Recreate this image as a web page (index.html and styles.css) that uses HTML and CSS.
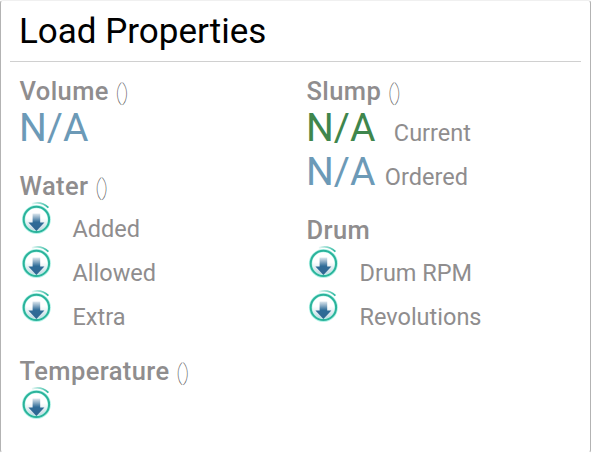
FILE: index.html
```html
<!DOCTYPE html>
<html lang="en">
<head>
  <meta charset="UTF-8">
  <title>Load Properties</title>
  <link rel="stylesheet" href="styles.css">
</head>
<body>
  <!-- shared waiting-for-data icon -->
  <svg class="defs" width="0" height="0">
    <defs>
      <linearGradient id="arrowFade" x1="0" y1="0" x2="0" y2="1">
        <stop offset="0" stop-color="#2f6c98" stop-opacity="0.15"/>
        <stop offset="0.5" stop-color="#2f6c98"/>
        <stop offset="1" stop-color="#2f6691"/>
      </linearGradient>
      <linearGradient id="discFade" x1="0" y1="0" x2="0" y2="1">
        <stop offset="0.45" stop-color="#fff"/>
        <stop offset="1" stop-color="#b9d3de"/>
      </linearGradient>
      <linearGradient id="tailFade" x1="0" y1="0" x2="1" y2="0">
        <stop offset="0" stop-color="#2bb9a0" stop-opacity="0.1"/>
        <stop offset="1" stop-color="#2bb9a0"/>
      </linearGradient>
      <symbol id="loading" viewBox="0 0 32 34">
        <circle cx="16.4" cy="19.4" r="12.8" fill="url(#discFade)" stroke="#b4f3e8" stroke-width="3.4"/>
        <circle cx="16.4" cy="19.4" r="12.7" fill="none" stroke="#2bb39b" stroke-width="2"/>
        <path d="M12 3.8C18 1.8 24 3.6 28.4 7.6" fill="none" stroke="url(#tailFade)" stroke-width="1.8"/>
        <path d="M12.6 13.4h7.6v9.2h4.2L16.4 30.9L8.4 22.6h4.2z" fill="url(#arrowFade)"/>
      </symbol>
    </defs>
  </svg>

  <div class="card">
    <h1 class="card-title">Load Properties</h1>
    <div class="columns">
      <div class="column">
        <section class="group">
          <h2>Volume <span class="unit">()</span></h2>
          <div class="row"><span class="value">N/A</span></div>
        </section>
        <section class="group water">
          <h2>Water <span class="unit">()</span></h2>
          <div class="row"><svg class="icon"><use href="#loading"/></svg><span class="label">Added</span></div>
          <div class="row"><svg class="icon"><use href="#loading"/></svg><span class="label">Allowed</span></div>
          <div class="row"><svg class="icon"><use href="#loading"/></svg><span class="label">Extra</span></div>
        </section>
        <section class="group">
          <h2>Temperature <span class="unit">()</span></h2>
          <div class="row"><svg class="icon"><use href="#loading"/></svg></div>
        </section>
      </div>
      <div class="column">
        <section class="group">
          <h2>Slump <span class="unit">()</span></h2>
          <div class="row"><span class="value current">N/A</span><span class="label">Current</span></div>
          <div class="row"><span class="value">N/A</span><span class="label">Ordered</span></div>
        </section>
        <section class="group">
          <h2>Drum</h2>
          <div class="row"><svg class="icon"><use href="#loading"/></svg><span class="label">Drum RPM</span></div>
          <div class="row"><svg class="icon"><use href="#loading"/></svg><span class="label">Revolutions</span></div>
        </section>
      </div>
    </div>
  </div>
</body>
</html>
```
FILE: styles.css
```css
* {
  box-sizing: border-box;
}

body {
  margin: 0;
  font-family: Roboto, sans-serif;
  color: #8f8d8e;
  background-color: #fff;
}

.defs {
  display: block;
}

.card {
  height: 453px;
  padding: 0 9px;
  border: 1px solid #b3b3b3;
  border-top-color: #f0f0f0;
  border-bottom-color: #fff;
  border-radius: 3px;
  overflow: hidden;
}

.card-title {
  height: 61px;
  margin: 0;
  padding-left: 9px;
  border-bottom: 1px solid #d0d0d0;
  font-size: 35px;
  font-weight: 400;
  line-height: 61px;
  color: #000;
}

.columns {
  display: grid;
  grid-template-columns: 287px 1fr;
  padding: 13px 0 0 9.5px;
}

.group {
  margin-bottom: 18px;
}

.water {
  margin-bottom: 20px;
}

h2 {
  height: 33px;
  margin: 0;
  font-size: 25.5px;
  font-weight: 500;
  line-height: 32px;
  letter-spacing: 0.4px;
}

.unit {
  font-size: 21.5px;
  font-weight: 100;
  line-height: 1;
  letter-spacing: 0;
  color: #555;
}

.row {
  display: flex;
  height: 44px;
}

.value {
  margin-left: -0.5px;
  font-size: 39px;
  line-height: 41px;
  color: #6c9ab7;
}

.value.current {
  margin-right: 9px;
  color: #3f864d;
}

.label {
  margin-left: 9.5px;
  font-size: 23.5px;
  line-height: 50px;
}

.icon {
  width: 32px;
  height: 34px;
  margin-top: -3px;
}

.icon + .label {
  margin-left: 21px;
  line-height: 52px;
}
```
